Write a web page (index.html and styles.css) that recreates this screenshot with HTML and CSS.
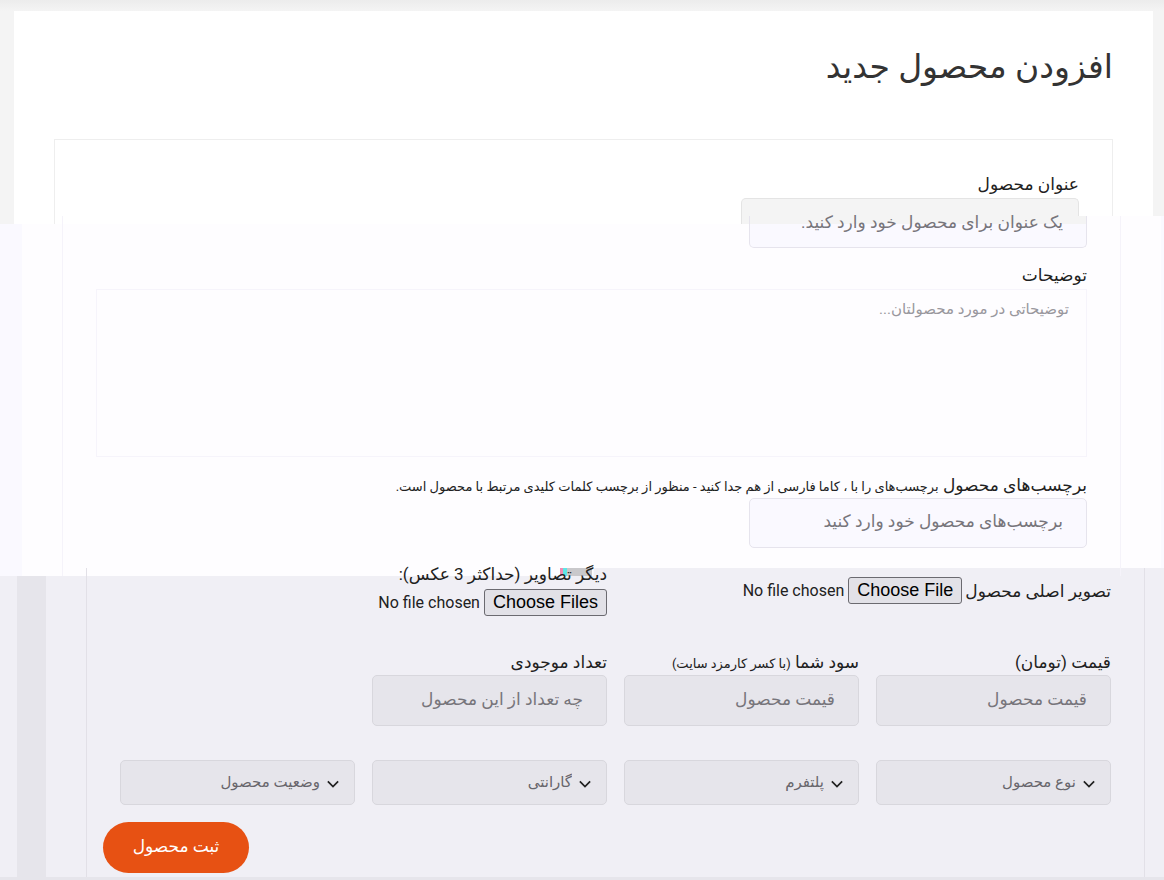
FILE: index.html
```html
<!DOCTYPE html>
<html lang="fa" dir="rtl">
<head>
  <meta charset="UTF-8">
  <meta name="viewport" content="width=device-width, initial-scale=1.0">
  <title>افزودن محصول جدید</title>
  <link rel="stylesheet" href="styles.css">
</head>
<body>
  <form class="page">
    <section class="band band-top">
      <div class="card">
        <h1>افزودن محصول جدید</h1>
        <div class="panel">
          <label class="label" for="title">عنوان محصول</label>
          <div class="field-cap"></div>
        </div>
      </div>
    </section>

    <section class="band band-middle">
      <div class="card">
        <div class="panel">
          <div class="field-base">
            <input class="input input-joined" id="title" type="text" placeholder="یک عنوان برای محصول خود وارد کنید.">
          </div>
          <label class="label" for="description">توضیحات</label>
          <textarea class="textarea" id="description" placeholder="توضیحاتی در مورد محصولتان..."></textarea>
          <label class="label" for="tags">برچسب‌های محصول <small>برچسب‌های را با ، کاما فارسی از هم جدا کنید - منظور از برچسب کلمات کلیدی مرتبط با محصول است.</small></label>
          <input class="input" id="tags" type="text" placeholder="برچسب‌های محصول خود وارد کنید">
        </div>
      </div>
    </section>

    <section class="band band-bottom">
      <div class="card">
        <div class="panel">
          <div class="files">
            <div class="file-main">
              <label for="image">تصویر اصلی محصول</label>
              <input class="file" id="image" type="file">
            </div>
            <div class="file-more">
              <label class="label mark" for="images">دیگر تصاویر (حداکثر 3 عکس):</label>
              <input class="file" id="images" type="file" multiple>
            </div>
          </div>

          <div class="row">
            <div>
              <label class="label" for="price">قیمت (تومان)</label>
              <input class="input" id="price" type="text" placeholder="قیمت محصول">
            </div>
            <div>
              <label class="label" for="profit">سود شما <small>(با کسر کارمزد سایت)</small></label>
              <input class="input" id="profit" type="text" placeholder="قیمت محصول">
            </div>
            <div>
              <label class="label" for="stock">تعداد موجودی</label>
              <input class="input" id="stock" type="text" placeholder="چه تعداد از این محصول">
            </div>
          </div>

          <div class="row row-selects">
            <div class="select-wrap">
              <svg viewBox="0 0 14 8"><path d="M1 1l6 6 6-6"/></svg>
              <select class="select" aria-label="نوع محصول"><option>نوع محصول</option></select>
            </div>
            <div class="select-wrap">
              <svg viewBox="0 0 14 8"><path d="M1 1l6 6 6-6"/></svg>
              <select class="select" aria-label="پلتفرم"><option>پلتفرم</option></select>
            </div>
            <div class="select-wrap">
              <svg viewBox="0 0 14 8"><path d="M1 1l6 6 6-6"/></svg>
              <select class="select" aria-label="گارانتی"><option>گارانتی</option></select>
            </div>
            <div class="select-wrap">
              <svg viewBox="0 0 14 8"><path d="M1 1l6 6 6-6"/></svg>
              <select class="select" aria-label="وضعیت محصول"><option>وضعیت محصول</option></select>
            </div>
          </div>

          <div class="actions">
            <button class="submit" type="submit">ثبت محصول</button>
          </div>
        </div>
      </div>
    </section>
  </form>
</body>
</html>
```
FILE: styles.css
```css
* {
  box-sizing: border-box;
}

body {
  margin: 0;
  background: #e6e5eb;
  color: #212121;
  font-family: Roboto, "DejaVu Sans", sans-serif;
  font-size: 17px;
  line-height: 24px;
}

input,
textarea,
select,
button {
  font-family: inherit;
}

.page {
  position: relative;
  z-index: 0;
}

.band {
  position: relative;
}

.panel {
  border: 1px solid #eeeeee;
  border-bottom: 0;
}

/* top band */
.band-top {
  z-index: -2;
  padding: 11px 11px 0 14px;
  background: linear-gradient(#ececec, #f4f4f4 11px);
}

.band-top .card {
  padding: 32px 40px 0;
  background: #fff;
}

.band-top .panel {
  padding: 32px 33px 0;
}

h1 {
  margin: 0 0 48px;
  color: #333;
  font-size: 33px;
  font-weight: 500;
  line-height: 48px;
}

.label {
  display: block;
  white-space: nowrap;
}

.label small {
  font-size: 13px;
  line-height: 16px;
}

.field-cap {
  width: 338px;
  height: 26px;
  margin-top: 2px;
  border: 1px solid #e4e4e4;
  border-bottom: 0;
  border-radius: 5px 5px 0 0;
  background: #f4f4f4;
}

/* middle band, its upper edge has a step */
.band-middle {
  margin-top: -8px;
  padding: 0 3px 0 22px;
}

.band-middle::before,
.band-bottom::before {
  content: "";
  position: absolute;
  inset: 0;
  z-index: -1;
}

.band-middle::before {
  background: linear-gradient(90deg, #faf9ff 22px, #fefdff 22px, #fefdff calc(100% - 3px), #faf9ff calc(100% - 3px));
  clip-path: polygon(85% 0, 100% 0, 100% 100%, 0 100%, 0 8px, 85% 8px);
}

.band-middle .card {
  padding: 0 40px;
}

.band-middle .panel {
  padding: 0 33px 28px;
  border-color: #f5f3fa;
  border-top: 0;
}

.input {
  display: block;
  width: 338px;
  height: 50px;
  padding: 0 23px 4px;
  border: 1px solid #e6e4ed;
  border-radius: 5px;
  background: #faf9ff;
  font-size: 17px;
}

.input::placeholder {
  color: #77757b;
  opacity: 1;
}

.field-base {
  display: flex;
  align-items: flex-start;
  width: 338px;
  height: 32px;
  margin-bottom: 15px;
  border: 1px solid #e6e4ed;
  border-top: 0;
  border-radius: 0 0 5px 5px;
  background: linear-gradient(#f4f4f4 8px, #faf9ff 8px);
}

.input-joined {
  width: 100%;
  height: 32px;
  margin-top: -10px;
  padding: 0 23px;
  border: 0;
  background: transparent;
}

.textarea {
  display: block;
  width: 100%;
  height: 168px;
  margin: 2px 0 16px;
  padding: 7px 17px;
  border: 1px solid #f6f4fb;
  background: transparent;
  font-size: 15px;
  line-height: 24px;
  resize: none;
}

.textarea::placeholder {
  color: #99979d;
}

.band-middle .label + .input {
  margin-top: 1px;
}

/* bottom band */
.band-bottom {
  margin-top: -8px;
  padding: 0 0 3px 46px;
}

.band-bottom::before {
  bottom: 3px;
  background: linear-gradient(90deg, #f0eff5 17px, #e6e5eb 17px, #e6e5eb 46px, #f0eff5 46px);
  clip-path: polygon(51% 0, 100% 0, 100% 100%, 0 100%, 0 8px, 51% 8px);
}

.band-bottom .card {
  padding: 0 19px 0 40px;
}

.band-bottom .panel {
  padding: 0 33px 4px;
  border-color: #e2e0e7;
  border-top: 0;
}

.files,
.row {
  display: grid;
  grid-template-columns: repeat(4, 1fr);
  column-gap: 17px;
}

.files {
  height: 82px;
}

.file-main,
.file-more {
  grid-column: span 2;
}

.file-main {
  display: flex;
  align-items: center;
  align-self: start;
  gap: 3px;
  padding-top: 9px;
}

.file-more {
  margin-top: -6px;
}

.file-more .file {
  margin-top: 3px;
}

.mark {
  background: linear-gradient(90deg, #f08cb4 3px, #5fe6e6 3px, #5fe6e6 7px, #c9c8cb 7px) right 15px top 6px / 32px 8px no-repeat;
}

.file {
  display: block;
  height: 28px;
  font-size: 16px;
}

.file::file-selector-button {
  height: 27px;
  padding: 0 8px;
  border: 1px solid #6b6a70;
  border-radius: 3px;
  background: #e2e1e7;
  color: #000;
  font-family: "Liberation Sans", Arial, sans-serif;
  font-size: 18px;
}

.band-bottom .input {
  width: 100%;
  height: 51px;
  margin-top: 1px;
  border-color: #d8d7dd;
  background: #e6e5eb;
}

.row-selects {
  margin-top: 34px;
}

.select-wrap {
  display: flex;
  align-items: center;
  height: 45px;
  padding: 0 15px;
  border: 1px solid #d8d7dd;
  border-radius: 5px;
  background: #e6e5eb;
}

.select-wrap svg {
  width: 12px;
  height: 8px;
  margin-top: 3px;
  fill: none;
  stroke: #212121;
  stroke-width: 2;
}

.select {
  flex: 1;
  height: 100%;
  padding: 0 7px 2px 0;
  border: 0;
  background: transparent;
  color: #68666c;
  font-size: 15px;
  appearance: none;
}

.actions {
  display: flex;
  justify-content: flex-end;
  margin: 17px 0 0 -17px;
}

.submit {
  width: 146px;
  height: 51px;
  padding-bottom: 5px;
  border: 0;
  border-radius: 26px;
  background: #e75113;
  color: #fff;
  font-size: 17px;
  cursor: pointer;
}
```
